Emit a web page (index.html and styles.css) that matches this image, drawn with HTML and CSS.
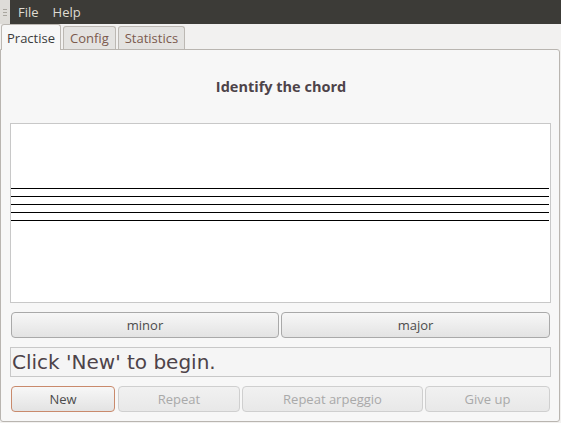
FILE: index.html
```html
<!DOCTYPE html>
<html>
<head>
<meta charset="utf-8">
<link rel="stylesheet" href="styles.css">
</head>
<body>
<div class="menubar">
  <div class="grip"><span></span><span></span><span></span></div>
  <div class="menus">
    <span class="menu">File</span>
    <span class="menu">Help</span>
  </div>
</div>
<div class="tabs">
  <div class="tab active">Practise</div>
  <div class="tab">Config</div>
  <div class="tab">Statistics</div>
</div>
<div class="panel">
  <div class="title">Identify the chord</div>
  <div class="canvas">
    <svg class="staff" width="538" height="178" viewBox="0 0 538 178">
      <rect x="0" y="64" width="538" height="1" fill="#000"/>
      <rect x="0" y="72" width="538" height="1" fill="#000"/>
      <rect x="0" y="80" width="538" height="1" fill="#000"/>
      <rect x="0" y="88" width="538" height="1" fill="#000"/>
      <rect x="0" y="96" width="538" height="1" fill="#000"/>
    </svg>
  </div>
  <div class="row answers">
    <button class="btn w-minor">minor</button>
    <button class="btn w-major">major</button>
  </div>
  <div class="status">Click 'New' to begin.</div>
  <div class="row actions">
    <button class="btn focus w-new">New</button>
    <button class="btn disabled w-repeat">Repeat</button>
    <button class="btn disabled w-arp">Repeat arpeggio</button>
    <button class="btn disabled w-give">Give up</button>
  </div>
</div>
</body>
</html>
```
FILE: styles.css
```css
html, body {
  margin: 0;
  padding: 0;
}
body {
  width: 561px;
  height: 423px;
  background: #f2f1f0;
  font-family: "Open Sans", "Noto Sans", sans-serif;
  overflow: hidden;
}
.menubar {
  display: flex;
  height: 24px;
}
.grip {
  width: 10px;
  background: #dedcd8;
  display: flex;
  flex-direction: column;
  align-items: center;
  justify-content: center;
  gap: 2px;
}
.grip span {
  width: 4px;
  height: 1px;
  background: #a9a69f;
}
.menus {
  flex: 1;
  background: #3c3b37;
  display: flex;
  align-items: center;
  padding-left: 8px;
  gap: 14px;
}
.menu {
  color: #dfdbd2;
  font-size: 13px;
}
.tabs {
  display: flex;
  align-items: flex-end;
  height: 25px;
  padding-left: 1px;
  gap: 2px;
  position: relative;
  z-index: 1;
}
.tab {
  height: 22px;
  padding: 0 6px;
  border: 1px solid #bcb8b3;
  border-bottom: none;
  border-radius: 3px 3px 0 0;
  background: #e4e3e1;
  color: #7b5a4e;
  font-size: 13px;
  line-height: 23px;
}
.tab.active {
  height: 25px;
  line-height: 26px;
  background: #f7f7f7;
  color: #3c3c3c;
  padding: 0 5px;
  margin-bottom: -1px;
}
.panel {
  border: 1px solid #b9b5b0;
  border-radius: 0 3px 3px 3px;
  background: #f7f7f7;
  padding: 0 8px;
  box-sizing: border-box;
  width: 560px;
  height: 373px;
  display: flex;
  flex-direction: column;
}
.title {
  height: 73px;
  display: flex;
  align-items: center;
  justify-content: center;
  font-weight: bold;
  font-size: 14.5px;
  color: #4d4349;
  padding-left: 2px;
}
.canvas {
  height: 178px;
  margin-left: 1px;
  border: 1px solid #c8c8c8;
  background: #fff;
}
.staff {
  display: block;
}
.row {
  display: flex;
  margin: 9px 0 0 2px;
  gap: 2px;
}
.btn {
  height: 26px;
  box-sizing: border-box;
  border: 1px solid #a9a9a9;
  border-radius: 4px;
  background: linear-gradient(#f7f7f7, #e3e3e3);
  font-family: "Open Sans", "Noto Sans", sans-serif;
  font-size: 13px;
  color: #4c4c4c;
  padding: 0;
}
.btn.disabled {
  color: #a9a9a9;
  border-color: #cfcfcf;
  background: linear-gradient(#f1f1f1, #e8e8e8);
}
.btn.focus {
  border-color: #c98a6c;
}
.w-minor { width: 268px; }
.w-major { width: 269px; }
.w-new { width: 104px; }
.w-repeat { width: 122px; margin-left: 1px; }
.w-arp { width: 181px; }
.w-give { width: 125px; }
.status {
  margin: 9px 0 0 1px;
  height: 30px;
  box-sizing: border-box;
  border: 1px solid #c8c8c8;
  background: #f5f5f5;
  font-family: "DejaVu Sans", sans-serif;
  font-size: 20px;
  color: #4d4349;
  line-height: 28px;
  padding-left: 1px;
}
```
